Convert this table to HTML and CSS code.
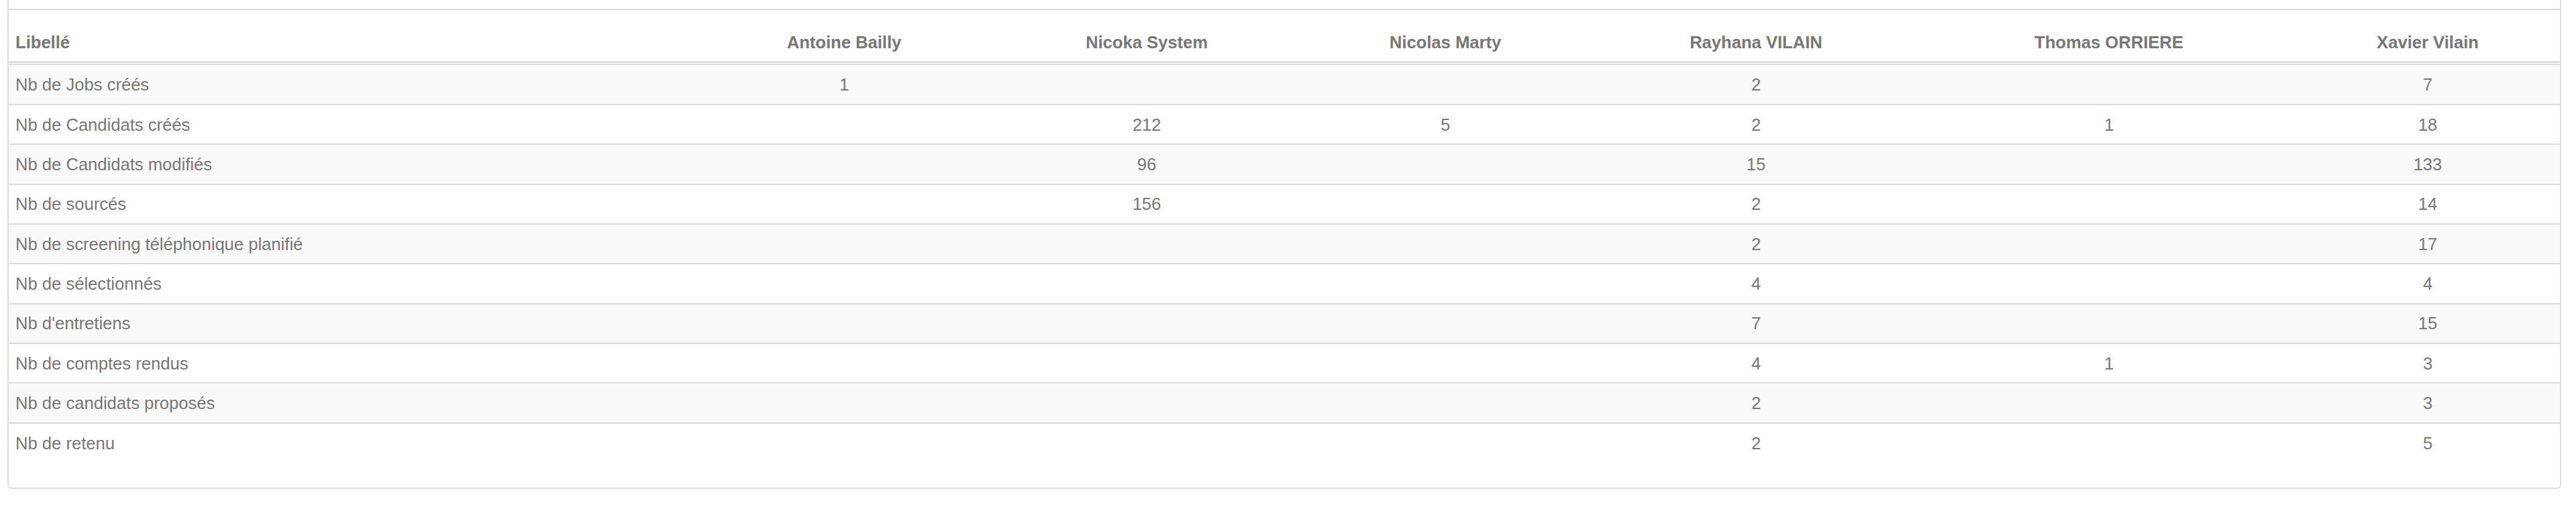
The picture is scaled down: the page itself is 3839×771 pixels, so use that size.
FILE: index.html
```html
<!DOCTYPE html>
<html lang="fr">
<head>
<meta charset="utf-8">
<title>Statistiques</title>
<link rel="stylesheet" href="styles.css">
</head>
<body>
<div class="panel">
  <div class="panel-cut"></div>
  <table class="grid head-table">
    <colgroup>
      <col class="c0"><col class="c1"><col class="c2"><col class="c3"><col class="c4"><col class="c5"><col class="c6">
    </colgroup>
    <thead>
      <tr>
        <th class="label">Libellé</th>
        <th>Antoine Bailly</th>
        <th>Nicoka System</th>
        <th>Nicolas Marty</th>
        <th>Rayhana VILAIN</th>
        <th>Thomas ORRIERE</th>
        <th>Xavier Vilain</th>
      </tr>
    </thead>
  </table>
  <table class="grid body-table">
    <colgroup>
      <col class="c0"><col class="c1"><col class="c2"><col class="c3"><col class="c4"><col class="c5"><col class="c6">
    </colgroup>
    <tbody>
      <tr><td class="label">Nb de Jobs créés</td><td>1</td><td></td><td></td><td>2</td><td></td><td>7</td></tr>
      <tr><td class="label">Nb de Candidats créés</td><td></td><td>212</td><td>5</td><td>2</td><td>1</td><td>18</td></tr>
      <tr><td class="label">Nb de Candidats modifiés</td><td></td><td>96</td><td></td><td>15</td><td></td><td>133</td></tr>
      <tr><td class="label">Nb de sourcés</td><td></td><td>156</td><td></td><td>2</td><td></td><td>14</td></tr>
      <tr><td class="label">Nb de screening téléphonique planifié</td><td></td><td></td><td></td><td>2</td><td></td><td>17</td></tr>
      <tr><td class="label">Nb de sélectionnés</td><td></td><td></td><td></td><td>4</td><td></td><td>4</td></tr>
      <tr><td class="label">Nb d'entretiens</td><td></td><td></td><td></td><td>7</td><td></td><td>15</td></tr>
      <tr><td class="label">Nb de comptes rendus</td><td></td><td></td><td></td><td>4</td><td>1</td><td>3</td></tr>
      <tr><td class="label">Nb de candidats proposés</td><td></td><td></td><td></td><td>2</td><td></td><td>3</td></tr>
      <tr><td class="label">Nb de retenu</td><td></td><td></td><td></td><td>2</td><td></td><td>5</td></tr>
    </tbody>
  </table>
  <div class="panel-foot"></div>
</div>
</body>
</html>
```

FILE: styles.css
```css
html, body {
  margin: 0;
  padding: 0;
  background: #ffffff;
}

body {
  font-family: "Liberation Sans", Arial, sans-serif;
  font-size: 25.6px;
  color: #777777;
}

.panel {
  box-sizing: border-box;
  width: 3806px;
  margin-left: 11px;
  border: 2px solid #dddddd;
  border-top: none;
  border-radius: 0 0 6px 6px;
  background: #ffffff;
}

.panel-cut {
  height: 13px;
}

.grid {
  width: 100%;
  table-layout: fixed;
  border-collapse: separate;
  border-spacing: 0;
}

.c0 { width: 1024px; }
.c1 { width: 442px; }
.c2 { width: 460px; }
.c3 { width: 430px; }
.c4 { width: 496px; }
.c5 { width: 556px; }
.c6 { width: 394px; }

.head-table {
  border-top: 2px solid #dddddd;
}

.head-table th {
  height: 32px;
  padding: 32.1px 10px 11.9px;
  line-height: 32px;
  font-weight: bold;
  color: #777777;
  text-align: center;
  vertical-align: bottom;
  border-bottom: 3px solid #dddddd;
  white-space: nowrap;
}

.head-table th.label {
  text-align: left;
}

.body-table {
  margin-top: 1.5px;
}

.body-table td {
  padding: 12.7px 10px;
  line-height: 32px;
  text-align: center;
  vertical-align: top;
  border-top: 2px solid #dddddd;
  white-space: nowrap;
}

.body-table td.label {
  text-align: left;
}

.body-table tbody tr:nth-child(odd) td {
  background: #f9f9f9;
}

.panel-foot {
  height: 37.6px;
}
```
